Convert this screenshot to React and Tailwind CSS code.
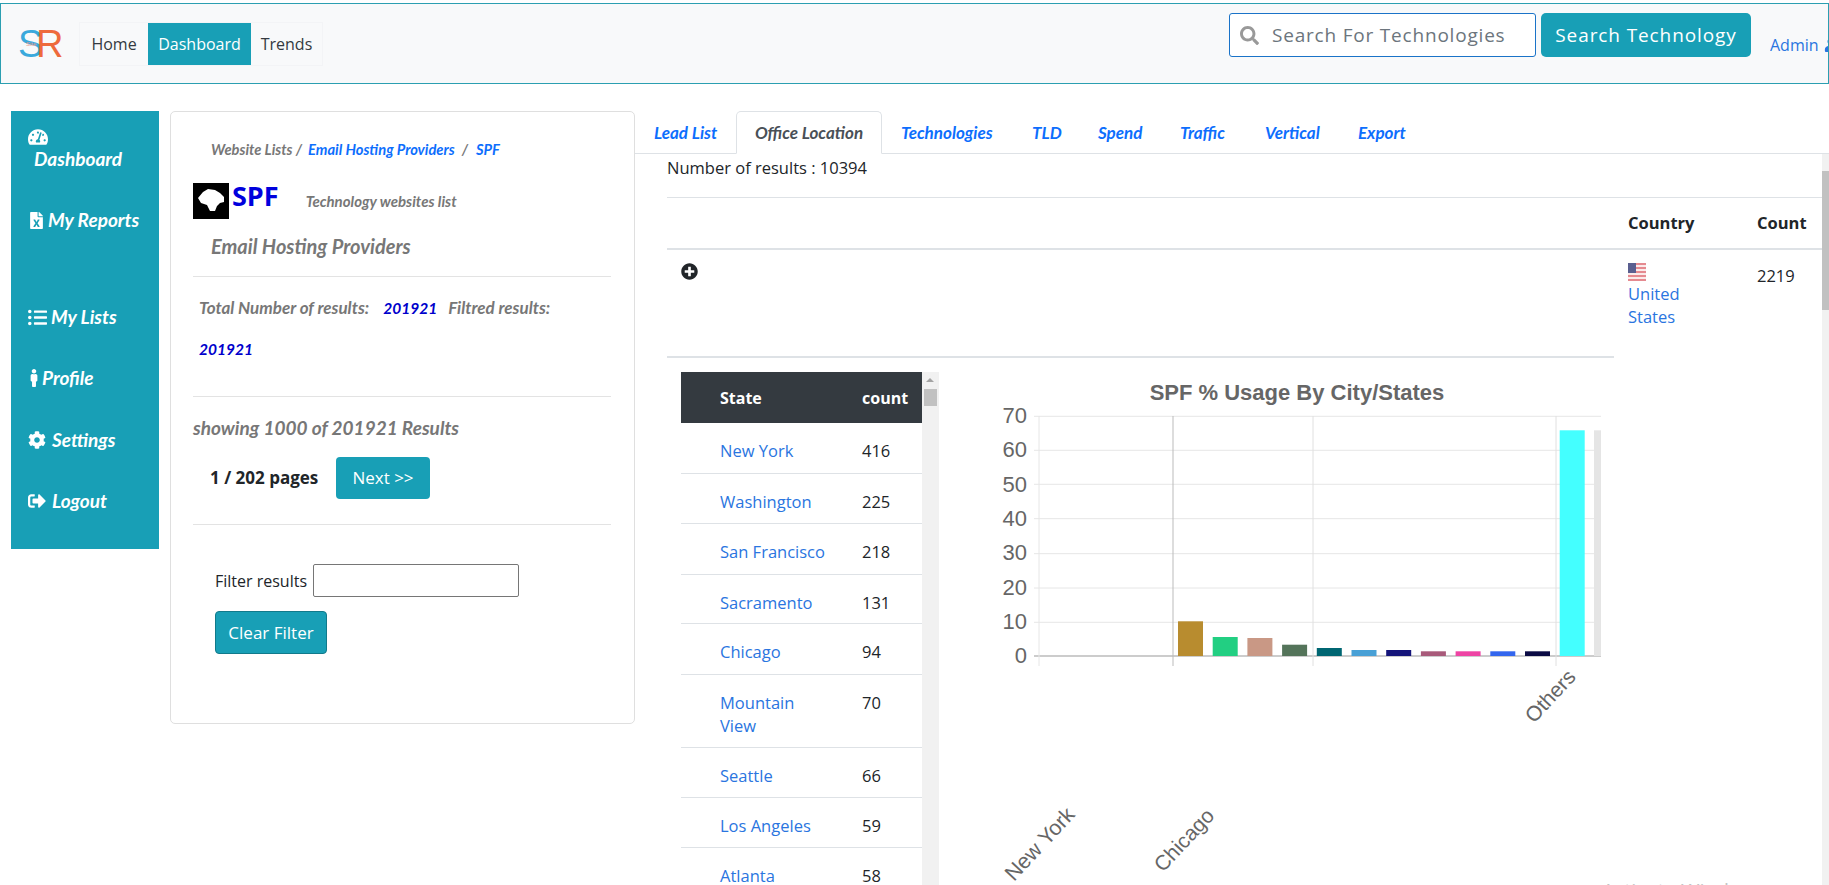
import React from "react";
import {
  FaTachometerAlt,
  FaFileExcel,
  FaListUl,
  FaMale,
  FaCog,
  FaSignOutAlt,
  FaSearch,
  FaPlusCircle,
  FaUser,
} from "react-icons/fa";

const tabs = [
  { label: "Lead List", w: "w-[101px]" },
  { label: "Office Location", w: "w-[146px]", active: true },
  { label: "Technologies", w: "w-[131px]" },
  { label: "TLD", w: "w-[66px]" },
  { label: "Spend", w: "w-[82px]" },
  { label: "Traffic", w: "w-[85px]" },
  { label: "Vertical", w: "w-[93px]" },
  { label: "Export", w: "w-[80px]" },
];

const states = [
  { name: "New York", count: 416, h: "h-[51px]", pr: "pr-[20px]" },
  { name: "Washington", count: 225, h: "h-[50px]", pr: "pr-[20px]" },
  { name: "San Francisco", count: 218, h: "h-[51px]", pr: "pr-[20px]" },
  { name: "Sacramento", count: 131, h: "h-[49px]", pr: "pr-[20px]" },
  { name: "Chicago", count: 94, h: "h-[51px]", pr: "pr-[20px]" },
  { name: "Mountain View", count: 70, h: "h-[73px]", pr: "pr-[50px]" },
  { name: "Seattle", count: 66, h: "h-[50px]", pr: "pr-[20px]" },
  { name: "Los Angeles", count: 59, h: "h-[50px]", pr: "pr-[20px]" },
  { name: "Atlanta", count: 58, h: "h-[50px]", pr: "pr-[20px]" },
];

const bars = [
  { top: 621.3, color: "#b88c2f" },
  { top: 637, color: "#22cf82" },
  { top: 638, color: "#c99885" },
  { top: 644.7, color: "#54745a" },
  { top: 648, color: "#006672" },
  { top: 650, color: "#48a0d6" },
  { top: 650, color: "#14147a" },
  { top: 651.3, color: "#a85a7a" },
  { top: 651.3, color: "#ee44a4" },
  { top: 651.3, color: "#3366ee" },
  { top: 651.3, color: "#0b0b44" },
  { top: 430.3, color: "#44ffff" },
];

function SideItem({ icon, label, className }) {
  return (
    <div className={"flex items-center pl-[17px] text-[19px] leading-[24px] font-bold italic text-white font-['Lato',sans-serif] " + className}>
      {icon}
      <span>{label}</span>
    </div>
  );
}

function Sidebar() {
  return (
    <div className="w-[148px] h-[438px] ml-[11px] shrink-0 bg-[#189fb6] pt-[16px]">
      <FaTachometerAlt className="ml-[17px] text-[20px] text-white" />
      <div className="pl-[23px] text-[19px] leading-[24px] font-bold italic text-white font-['Lato',sans-serif]">Dashboard</div>
      <SideItem className="mt-[37px]" icon={<FaFileExcel className="text-[17px] mr-[3px]" />} label="My Reports" />
      <SideItem className="mt-[73px]" icon={<FaListUl className="text-[19px] mr-[4px]" />} label="My Lists" />
      <SideItem className="mt-[37px]" icon={<FaMale className="text-[18px] -ml-[3px] -mr-[1px]" />} label="Profile" />
      <SideItem className="mt-[38px]" icon={<FaCog className="text-[18px] mr-[6px]" />} label="Settings" />
      <SideItem className="mt-[37px]" icon={<FaSignOutAlt className="text-[18px] mr-[6px]" />} label="Logout" />
    </div>
  );
}

function LeftCard() {
  return (
    <div className="w-[465px] h-[613px] ml-[11px] shrink-0 bg-white border border-[#dfdfdf] rounded-[5px] pl-[22px] pr-[23px] font-['Lato',sans-serif] italic font-bold text-[#777]">
      <div className="flex items-center pl-[18px] pt-[28px] text-[14.7px] h-[47px] leading-none whitespace-nowrap">
        <span>Website Lists /</span>
        <span className="ml-[6px] text-[#0d6efd]">Email Hosting Providers</span>
        <span className="ml-[7px]">/</span>
        <span className="ml-[8px] text-[#0d6efd]">SPF</span>
      </div>
      <div className="flex items-start mt-[24px]">
        <svg width="36" height="36" viewBox="0 0 36 36" className="shrink-0 bg-black">
          <path className="blur-[0.6px]" d="M5 15 L10 9 L15 6 L22 7 L27 10 L31 14 L31 19 L27 20 L24 23 L22 28 L17 28 L14 22 L8 20 Z" fill="#fff" />
        </svg>
        <span className="ml-[3px] text-[27px] leading-[26px] text-[#0000dd] not-italic font-['Open_Sans',sans-serif]">SPF</span>
        <span className="ml-[27px] mt-[7px] text-[15px] whitespace-nowrap">Technology websites list</span>
      </div>
      <div className="pl-[18px] mt-[15px] text-[20px] leading-[24px]">Email Hosting Providers</div>
      <div className="mt-[18px] border-t border-[#e3e3e3]" />
      <div className="flex pl-[6px] mt-[21px] text-[17px] leading-[20px] whitespace-nowrap">
        <span>Total Number of results:</span>
        <span className="ml-[14px] text-[15.5px] text-[#0000cc]">201921</span>
        <span className="ml-[11px]">Filtred results:</span>
      </div>
      <div className="pl-[6px] mt-[21px] text-[15.5px] leading-[20px] text-[#0000cc]">201921</div>
      <div className="mt-[37px] border-t border-[#e3e3e3]" />
      <div className="mt-[19px] text-[19px] leading-[24px]">showing 1000 of 201921 Results</div>
      <div className="flex items-center pl-[17px] mt-[17px] not-italic font-['Open_Sans',sans-serif]">
        <span className="w-[126px] text-[17px] font-bold text-[#212529] whitespace-nowrap">1 / 202 pages</span>
        <button className="w-[94px] h-[42px] rounded-[4px] bg-[#189fb6] text-white text-[17px] font-normal">Next &gt;&gt;</button>
      </div>
      <div className="mt-[25px] border-t border-[#e3e3e3]" />
      <div className="flex items-center pl-[22px] mt-[39px] not-italic font-normal font-['Open_Sans',sans-serif] text-[#212529] text-[16px]">
        <span className="w-[98px]">Filter results</span>
        <input className="w-[206px] h-[33px] border border-[#767676] rounded-[2px] bg-white" />
      </div>
      <button className="ml-[22px] mt-[14px] w-[112px] h-[43px] rounded-[4px] bg-[#189fb6] border border-[#117a8b] text-white not-italic font-normal font-['Open_Sans',sans-serif] text-[17px]">Clear Filter</button>
    </div>
  );
}

function StateTable() {
  return (
    <div className="flex ml-[14px] shrink-0 h-[513px] overflow-hidden">
      <div className="w-[241px]">
        <div className="flex items-center h-[51px] bg-[#343a40] text-white text-[16px] font-bold">
          <span className="w-[181px] pl-[39px]">State</span>
          <span>count</span>
        </div>
        {states.map((s) => (
          <div key={s.name} className={"flex pt-[16px] border-b border-[#dee2e6] leading-[23px] text-[16.5px] " + s.h}>
            <span className={"w-[181px] pl-[39px] text-[#2a75e0] " + s.pr}>{s.name}</span>
            <span className="text-[#212529]">{s.count}</span>
          </div>
        ))}
      </div>
      <div className="relative w-[17px] bg-[#f1f1f1]">
        <div className="absolute left-[8px] top-[6px] -translate-x-1/2 w-0 h-0 border-x-[4px] border-x-transparent border-b-[4px] border-b-[#a3a3a3]" />
        <div className="absolute left-[2px] top-[17px] w-[13px] h-[17px] bg-[#c1c1c1]" />
      </div>
    </div>
  );
}

function Chart() {
  const gridY = [416.3, 450.3, 484.3, 518.7, 553.7, 588, 622.3];
  const labels = ["70", "60", "50", "40", "30", "20", "10", "0"];
  const labelY = [415, 449.3, 483.6, 518, 552, 586.6, 621, 655];
  return (
    <svg width="660" height="513" viewBox="960 372 660 513" className="ml-[21px] shrink-0 font-['Liberation_Sans',sans-serif]">
      <text x="1297" y="400" textAnchor="middle" fontSize="22" fontWeight="700" fill="#666">SPF % Usage By City/States</text>
      {gridY.map((y) => (
        <line key={y} x1="1034" x2="1601" y1={y} y2={y} stroke="#e6e6e6" />
      ))}
      <line x1="1034" x2="1601" y1="656" y2="656" stroke="#999" />
      <line x1="1039" x2="1039" y1="416" y2="666" stroke="#e6e6e6" />
      <line x1="1173" x2="1173" y1="416" y2="666" stroke="#bbb" />
      <line x1="1313" x2="1313" y1="416" y2="666" stroke="#e0e0e0" />
      <line x1="1556" x2="1556" y1="416" y2="666" stroke="#e0e0e0" />
      {labels.map((l, i) => (
        <text key={l} x="1027" y={labelY[i] + 8} textAnchor="end" fontSize="22" fill="#666">{l}</text>
      ))}
      {bars.map((b, i) => (
        <rect key={i} x={1178 + 34.7 * i} y={b.top} width="25" height={656 - b.top} fill={b.color} />
      ))}
      <rect x="1594" y="430.3" width="7" height="225.7" fill="#e5e5e5" />
      <text x="1014" y="882" transform="rotate(-47 1014 882)" fontSize="21.5" fill="#666">New York</text>
      <text x="1163" y="873" transform="rotate(-47 1163 873)" fontSize="21" fill="#666">Chicago</text>
      <text x="1534" y="724" transform="rotate(-47 1534 724)" fontSize="21" fill="#666">Others</text>
    </svg>
  );
}

function RightPane() {
  return (
    <div className="flex-1 min-w-0 h-[801px] pt-[27px] flex flex-col">
      <div className="flex h-[43px] shrink-0 border-b border-[#dee2e6] text-[17px] font-bold italic font-['Lato',sans-serif]">
        {tabs.map((t) => (
          <div
            key={t.label}
            className={
              "flex items-center shrink-0 h-[43px] whitespace-nowrap " +
              t.w +
              (t.active
                ? " justify-center bg-white border border-[#dee2e6] border-b-white rounded-t-[5px] text-[#495057]"
                : " pl-[19px] text-[#0d6efd]")
            }
          >
            {t.label}
          </div>
        ))}
      </div>
      <div className="flex flex-1 min-h-0">
        <div className="flex-1 min-w-0 pl-[32px] text-[#212529] text-[16.5px] overflow-hidden">
          <div className="h-[43px] pt-[2px] leading-[24px]">Number of results : 10394</div>
          <div className="grid grid-cols-[961px_129px_1fr] h-[53px] items-center border-t border-[#dee2e6] border-b-2 font-bold">
            <span />
            <span>Country</span>
            <span>Count</span>
          </div>
          <div className="grid grid-cols-[961px_129px_1fr] h-[106px]">
            <FaPlusCircle className="ml-[14px] mt-[13px] text-[17px] text-[#212529]" />
            <div className="pt-[13px]">
              <svg width="18" height="18" viewBox="0 0 18 18" className="mb-[1px]">
                <rect width="18" height="18" fill="#fbeaea" />
                {[0, 4, 8, 12, 16].map((y) => (
                  <rect key={y} y={y} width="18" height="2" fill="#e58a90" />
                ))}
                <rect width="8" height="10" fill="#5a5f90" />
              </svg>
              <div className="leading-[23px] text-[#2a75e0]">United<br />States</div>
            </div>
            <span className="pt-[14px]">2219</span>
          </div>
          <div className="w-[947px] border-t-2 border-[#dee2e6]" />
          <div className="flex mt-[14px]">
            <StateTable />
            <Chart />
          </div>
        </div>
        <div className="relative w-[7px] shrink-0 bg-[#f1f1f1]">
          <div className="absolute left-0 top-[17px] w-[7px] h-[139px] bg-[#c1c1c1]" />
        </div>
      </div>
    </div>
  );
}

export default function App() {
  return (
    <div className="relative w-[1829px] h-[885px] overflow-hidden bg-white pt-[3px] font-['Open_Sans',sans-serif]">
      <nav className="flex items-start h-[81px] border border-[#2b9fb1] bg-[#f8f9fa] overflow-hidden">
        <div className="relative w-[78px] h-full shrink-0 font-['Liberation_Sans',sans-serif]">
          <span className="absolute left-[17px] top-[21px] text-[38px] leading-[38px] text-[#3aa9dc]">S</span>
          <span className="absolute left-[35px] top-[21px] text-[38px] leading-[38px] text-[#ee6a3c]">R</span>
          <span className="absolute left-[25px] top-[37px] text-[6px] leading-none text-[#e89a8a]">Site</span>
        </div>
        <div className="flex mt-[18px] h-[44px] items-center text-[16px] text-[#343a40] border border-[#f3f4f6]">
          <span className="flex items-center h-full w-[68px] justify-center">Home</span>
          <span className="flex items-center h-full w-[103px] justify-center bg-[#189fb6] text-white">Dashboard</span>
          <span className="flex items-center h-full w-[71px] justify-center">Trends</span>
        </div>
        <div className="ml-auto flex items-start mt-[9px] shrink-0">
          <div className="flex items-center w-[307px] h-[44px] bg-white border border-[#1a73c8] rounded-[3px] pl-[10px]">
            <FaSearch className="text-[19px] text-[#999]" />
            <span className="ml-[13px] text-[19px] tracking-[0.8px] text-[#6c757d] whitespace-nowrap">Search For Technologies</span>
          </div>
          <button className="ml-[5px] w-[210px] h-[44px] rounded-[5px] bg-[#189fb6] text-white text-[19px] tracking-[0.9px] whitespace-nowrap">Search Technology</button>
          <div className="flex items-center ml-[19px] w-[58px] mt-[20px] text-[16px] leading-[24px] text-[#2a75e0] overflow-hidden whitespace-nowrap">
            <span>Admin</span>
            <FaUser className="ml-[5px] shrink-0 text-[14px]" />
          </div>
        </div>
      </nav>
      <div className="flex items-start">
        <div className="flex items-start pt-[27px]">
          <Sidebar />
          <LeftCard />
        </div>
        <RightPane />
      </div>
      <div className="absolute left-[1602px] top-[879px] text-[20px] leading-[24px] text-[#c4c4c4] whitespace-nowrap">Activate Windows</div>
    </div>
  );
}
